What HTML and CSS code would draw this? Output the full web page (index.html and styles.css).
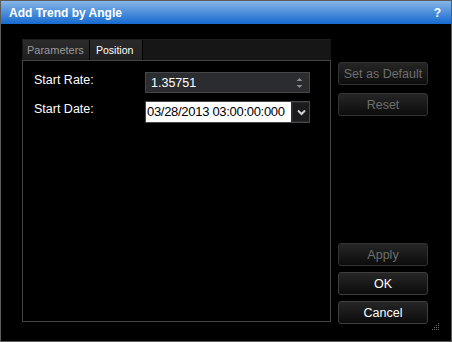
FILE: index.html
```html
<!DOCTYPE html>
<html lang="en">
<head>
    <meta charset="UTF-8">
    <title>Add Trend by Angle</title>
    <link rel="stylesheet" href="styles.css">
</head>
<body>
    <div class="window">
        <!-- Title bar -->
        <div class="title-bar">
            <span class="title">Add Trend by Angle</span>
            <span class="help">?</span>
        </div>

        <div class="content">
            <!-- Tabs and panel -->
            <div class="tabs-col">
                <div class="tab-strip">
                    <div class="tab">Parameters</div>
                    <div class="tab active">Position</div>
                </div>
                <div class="panel">
                    <div class="row">
                        <label class="label">Start Rate:</label>
                        <div class="spin">
                            <span class="spin-value">1.35751</span>
                            <span class="spin-arrows">
                                <svg width="7" height="12" viewBox="0 0 7 12">
                                    <path d="M0.5 4 L3.5 1 L6.5 4 Z" fill="#8a8a8a"/>
                                    <path d="M0.5 8 L3.5 11 L6.5 8 Z" fill="#8a8a8a"/>
                                </svg>
                            </span>
                        </div>
                    </div>
                    <div class="row row-date">
                        <label class="label">Start Date:</label>
                        <div class="date">
                            <span class="date-value">03/28/2013 03:00:00:000</span>
                            <span class="date-btn">
                                <svg width="9" height="7" viewBox="0 0 9 7">
                                    <path d="M1 1.5 L4.5 5 L8 1.5" fill="none" stroke="#d0d0d0" stroke-width="2"/>
                                </svg>
                            </span>
                        </div>
                    </div>
                </div>
            </div>

            <!-- Buttons -->
            <div class="btn-col">
                <button class="btn disabled">Set as Default</button>
                <button class="btn disabled">Reset</button>
                <div class="spacer"></div>
                <button class="btn disabled">Apply</button>
                <button class="btn">OK</button>
                <button class="btn">Cancel</button>
            </div>
        </div>

        <svg class="grip" width="9" height="9" viewBox="0 0 9 9">
            <rect x="7" y="1" width="1" height="1" fill="#666"/>
            <rect x="5" y="3" width="1" height="1" fill="#666"/>
            <rect x="7" y="3" width="1" height="1" fill="#666"/>
            <rect x="3" y="5" width="1" height="1" fill="#666"/>
            <rect x="5" y="5" width="1" height="1" fill="#666"/>
            <rect x="7" y="5" width="1" height="1" fill="#666"/>
            <rect x="1" y="7" width="1" height="1" fill="#666"/>
            <rect x="3" y="7" width="1" height="1" fill="#666"/>
            <rect x="5" y="7" width="1" height="1" fill="#666"/>
            <rect x="7" y="7" width="1" height="1" fill="#666"/>
        </svg>
    </div>
</body>
</html>
```

FILE: styles.css
```css
/* General styles */
* {
    box-sizing: border-box;
    margin: 0;
    padding: 0;
}

body {
    font-family: "Liberation Sans", Arial, sans-serif;
    font-size: 12px;
    background: #000;
    color: #fff;
}

.window {
    position: relative;
    width: 452px;
    height: 342px;
    border: 1px solid #5c5c5c;
    background: #000;
    display: flex;
    flex-direction: column;
}

/* Title bar */
.title-bar {
    height: 23px;
    display: flex;
    align-items: center;
    justify-content: space-between;
    padding: 0 10px 0 8px;
    background: linear-gradient(#86b6e6, #4d8fda 50%, #166ad0);
    font-weight: bold;
    font-size: 12px;
}

/* Main content */
.content {
    flex: 1;
    display: flex;
    padding: 15px 0 0 21px;
}

.tabs-col {
    width: 309px;
    display: flex;
    flex-direction: column;
    height: 283px;
}

.tab-strip {
    height: 21px;
    display: flex;
    background: #161616;
    border-top: 1px solid #202020;
    padding-left: 1px;
}

.tab {
    width: 67px;
    padding-left: 4px;
    line-height: 20px;
    color: #9a9a9a;
    background: linear-gradient(#2c2c2c, #1e1e1e);
    border-right: 1px solid #000;
    font-size: 11px;
}

.tab.active {
    width: 53px;
    color: #fff;
    background: linear-gradient(#2a2a2a, #222);
    padding-left: 6px;
    font-size: 10.5px;
}

.panel {
    flex: 1;
    border: 1px solid #444;
    padding: 11px 0 0 11px;
}

.row {
    display: flex;
    align-items: center;
}

.row-date {
    margin-top: 8px;
}

.label {
    width: 111px;
    font-size: 12.5px;
    padding-bottom: 6px;
}

.spin {
    width: 165px;
    height: 21px;
    background: #2b2c30;
    border: 1px solid #45464a;
    display: flex;
    align-items: center;
    justify-content: space-between;
    padding: 0 6px 0 5px;
}

.spin-value {
    font-size: 12.5px;
}

.spin-arrows {
    display: flex;
}

.date {
    width: 165px;
    height: 22px;
    background: #2b2c30;
    border: 1px solid #45464a;
    display: flex;
    align-items: center;
}

.date-value {
    background: #fff;
    color: #000;
    height: 20px;
    width: 145px;
    line-height: 20px;
    font-size: 13px;
    letter-spacing: -0.3px;
    padding-left: 1px;
    overflow: hidden;
    white-space: nowrap;
}

.date-btn {
    margin-left: 2px;
    width: 16px;
    height: 18px;
    background: #1b1b1d;
    display: flex;
    align-items: center;
    justify-content: center;
}

/* Buttons */
.btn-col {
    margin-left: 7px;
    width: 90px;
    padding-top: 23px;
    display: flex;
    flex-direction: column;
    gap: 8px;
    height: 285px;
}

.btn {
    height: 23px;
    border: 1px solid #3e3e3e;
    border-radius: 3px;
    background: linear-gradient(#262626, #0c0c0c);
    color: #fff;
    font-family: "Liberation Sans", Arial, sans-serif;
    font-size: 12.5px;
}

.btn.disabled {
    color: #6e6e6e;
    border-color: #333;
}

.btn-col .spacer {
    flex: 1;
}

.btn-col .spacer + .btn {
    margin-top: -2px;
}

.btn-col .btn:last-child {
    margin-top: -2px;
}

.btn-col .btn:nth-last-child(2) {
    margin-top: -2px;
}

.grip {
    position: absolute;
    right: 11px;
    bottom: 10px;
}
```
